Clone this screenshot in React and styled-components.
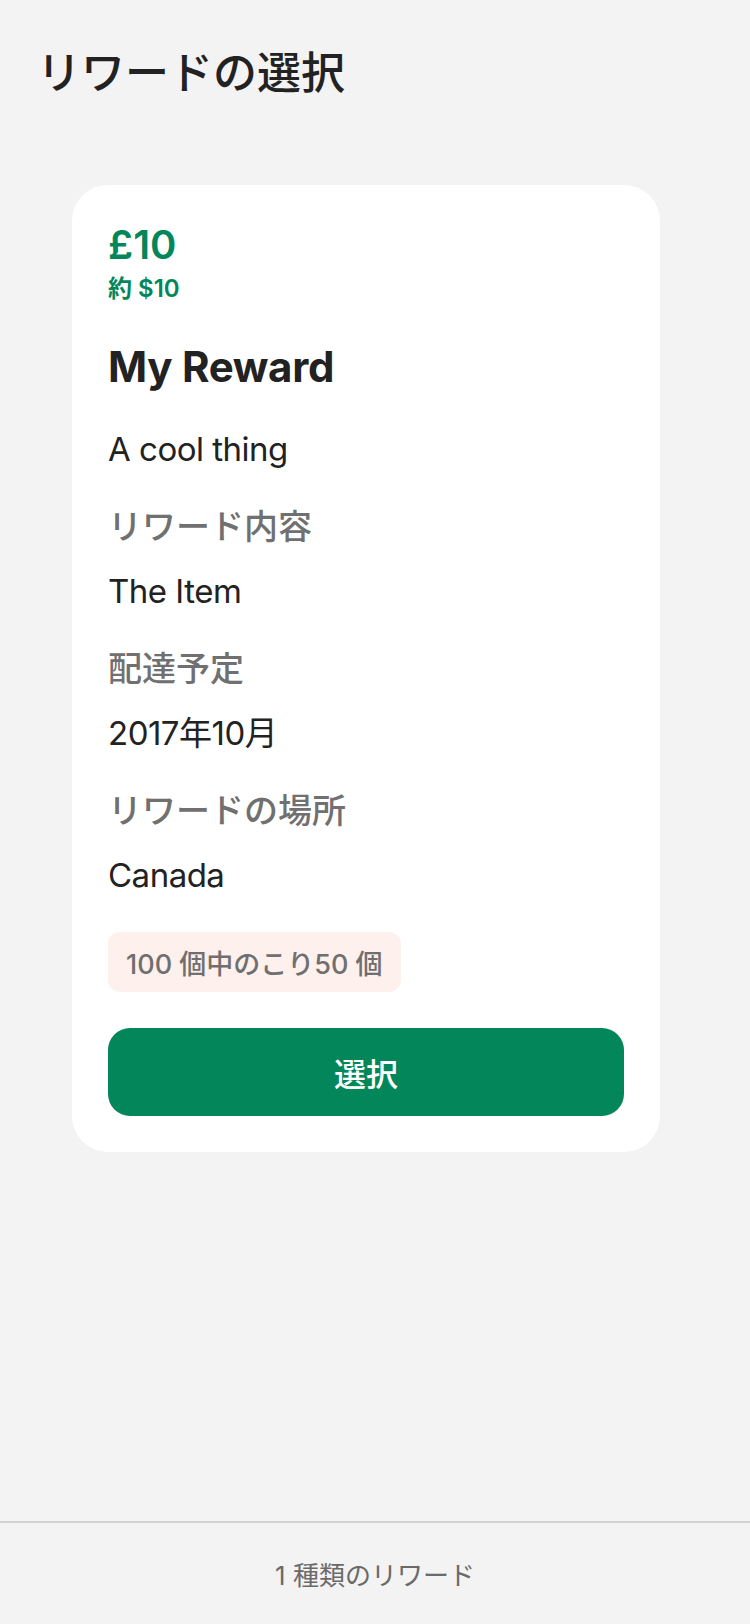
import React from 'react';
import styled, { createGlobalStyle } from 'styled-components';

const GlobalStyle = createGlobalStyle`
  html, body {
    margin: 0;
    padding: 0;
    background: #f3f3f3;
  }
  body {
    font-family: Inter, "Noto Sans CJK JP", sans-serif;
    color: #222222;
  }
  * { box-sizing: border-box; }
`;

const Page = styled.div`
  min-height: 1624px;
  display: flex;
  flex-direction: column;
`;

const Main = styled.main`
  flex: 1;
  padding: 47px 0 0 37px;
`;

const Title = styled.h1`
  margin: 0;
  font-size: 44px;
  line-height: 52px;
  font-weight: 500;
  color: #222222;
`;

const Card = styled.section`
  margin: 86px 0 0 35px;
  width: 588px;
  background: #ffffff;
  border-radius: 36px;
  padding: 36px;
  display: flex;
  flex-direction: column;
`;

const Price = styled.div`
  font-size: 40px;
  line-height: 48px;
  font-weight: 600;
  color: #03875a;
`;

const Approx = styled.div`
  margin-top: 5px;
  font-size: 24px;
  line-height: 30px;
  font-weight: 600;
  color: #03875a;
`;

const RewardName = styled.h2`
  margin: 37px 0 0;
  font-size: 42px;
  line-height: 52px;
  font-weight: 700;
  letter-spacing: -0.3px;
  color: #222222;
`;

const Details = styled.div`
  margin-top: 34px;
  display: flex;
  flex-direction: column;
  gap: 34px;
`;

const Field = styled.div`
  display: flex;
  flex-direction: column;
  gap: 20px;
`;

const Label = styled.div`
  font-size: 34px;
  line-height: 44px;
  font-weight: 500;
  color: #707070;
`;

const Value = styled.div`
  font-size: 33px;
  line-height: 44px;
  font-weight: 400;
  letter-spacing: -0.5px;
  color: #222222;
`;

const Remaining = styled.div`
  align-self: flex-start;
  margin-top: 1px;
  height: 60px;
  padding: 0 18px;
  display: inline-flex;
  align-items: center;
  background: #fef0ec;
  border-radius: 12px;
  font-size: 27px;
  font-weight: 500;
  color: #6f6f6f;
`;

const SelectButton = styled.button`
  margin-top: 36px;
  height: 88px;
  width: 100%;
  border: none;
  border-radius: 22px;
  background: #03875a;
  color: #ffffff;
  font-family: Inter, "Noto Sans CJK JP", sans-serif;
  font-size: 32px;
  font-weight: 500;
  cursor: pointer;
`;

const Footer = styled.footer`
  height: 103px;
  border-top: 2px solid #d3d3d3;
  display: flex;
  align-items: center;
  justify-content: center;
  font-size: 26px;
  font-weight: 400;
  color: #6a6a6a;
`;

const reward = {
  price: '£10',
  approx: '約 $10',
  name: 'My Reward',
  description: 'A cool thing',
  fields: [
    { label: 'リワード内容', value: 'The Item' },
    { label: '配達予定', value: '2017年10月' },
    { label: 'リワードの場所', value: 'Canada' },
  ],
  remaining: '100 個中のこり50 個',
};

export default function App() {
  return (
    <Page>
      <GlobalStyle />
      <Main>
        <Title>リワードの選択</Title>
        <Card>
          <Price>{reward.price}</Price>
          <Approx>{reward.approx}</Approx>
          <RewardName>{reward.name}</RewardName>
          <Details>
            <Value>{reward.description}</Value>
            {reward.fields.map((f) => (
              <Field key={f.label}>
                <Label>{f.label}</Label>
                <Value>{f.value}</Value>
              </Field>
            ))}
            <Remaining>{reward.remaining}</Remaining>
          </Details>
          <SelectButton type="button">選択</SelectButton>
        </Card>
      </Main>
      <Footer>1 種類のリワード</Footer>
    </Page>
  );
}
